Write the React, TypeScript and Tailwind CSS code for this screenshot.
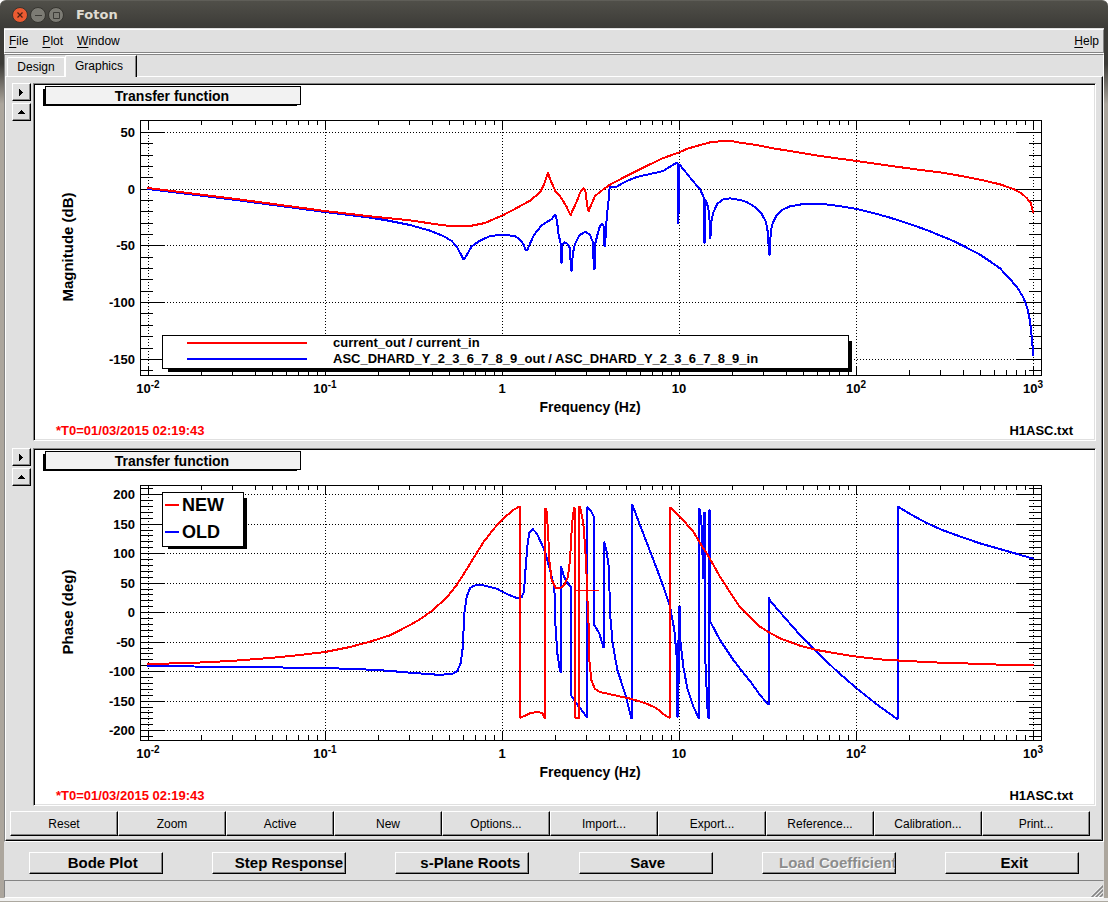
import { ReactNode } from 'react'
import { clsx } from 'clsx'

type Point = [number, number]

interface Trace {
    color: string
    points: Point[]
}

interface PlotProps {
    label: string
    zeroY: number
    perUnit: number
    min: number
    max: number
    majors: number[]
    traces: Trace[]
    children?: ReactNode
}

const RED = '#ff0000'
const BLUE = '#0000ff'

const RAISED = 'border border-t-white border-l-white border-r-black border-b-black bg-[#e0e0e0] shadow-[inset_-1px_-1px_0_#848484]'

// frame of the plot inside the pad
const FRAME = { left: 140, right: 1041, top: 120, bottom: 375 }
const DECADES = [148, 325, 502, 679, 856, 1033]
const DECADE_WIDTH = 177

const tools = ['Reset', 'Zoom', 'Active', 'New', 'Options...', 'Import...', 'Export...', 'Reference...', 'Calibration...', 'Print...']

const actions = [
    { label: 'Bode Plot', className: 'pl-3.5' },
    { label: 'Step Response', className: 'pl-5' },
    { label: 's-Plane Roots', className: 'pl-4' },
    { label: 'Save', className: 'pl-1' },
    { label: 'Load Coefficients', className: 'pl-4', disabled: true },
    { label: 'Exit', className: 'pl-1' },
]

// points are digitised in thirds of a unit, relative to an origin
function third(ox: number, oy: number, flat: number[]): Point[] {
    const out: Point[] = []
    for (let i = 0; i < flat.length; i += 2) {
        out.push([ox + flat[i] / 3, oy + flat[i + 1] / 3])
    }
    return out
}

const magnitudeNew: Point[] = [
    [148, 188], [236, 199], [325, 211],
    ...third(370, 110, [
        0, 319, 60, 325, 120, 331, 200, 343, 240, 348, 300, 348, 345, 339, 400, 315, 440, 294, 480, 272, 510, 247, 520, 228,
        530, 200, 534, 187, 540, 207, 556, 243, 575, 265, 590, 291, 602, 316, 607, 303, 620, 275, 632, 244, 642, 234,
        647, 247, 651, 284, 656, 304, 662, 288, 675, 258, 700, 238, 720, 224, 760, 203, 800, 183, 840, 163, 880, 144,
        928, 127, 950, 117, 980, 108, 1020, 97, 1060, 93, 1085, 93,
    ]),
    ...third(740, 110, [
        0, 98, 50, 105, 100, 115, 180, 128, 240, 138, 350, 153, 440, 166, 520, 177, 600, 187, 670, 199, 730, 211,
        780, 223, 820, 237, 845, 250, 862, 266, 872, 279, 876, 292, 879, 307,
    ]),
]

const magnitudeOld: Point[] = [
    [148, 189], [236, 200], [325, 212],
    ...third(370, 110, [
        0, 323, 50, 331, 120, 345, 180, 362, 220, 378, 245, 393, 260, 410, 272, 432, 281, 449, 292, 432, 305, 409,
        330, 392, 360, 378, 397, 374, 435, 378, 450, 389, 460, 402, 467, 420, 472, 420, 482, 397, 492, 375, 515, 346,
        545, 327, 556, 313, 561, 334, 566, 375, 573, 404, 574, 458, 576, 458, 577, 404, 582, 397, 592, 401, 600, 415,
        603, 482, 606, 482, 608, 432, 615, 403, 628, 376, 646, 365, 660, 375, 668, 395, 672, 478, 674, 478, 676, 400,
        684, 368, 690, 348, 697, 342, 701, 349, 703, 408, 706, 408, 707, 365, 712, 305, 716, 270, 719, 231, 740, 230,
        770, 213, 800, 201, 880, 183, 900, 170, 922, 157, 924, 163, 925, 341, 928, 163, 950, 190, 970, 215, 990, 237,
        1001, 262, 1002, 398, 1005, 398, 1006, 268, 1014, 290, 1018, 318, 1021, 386, 1024, 335, 1030, 307, 1042, 281,
        1060, 268, 1080, 265,
    ]),
    ...third(740, 110, [
        0, 270, 20, 276, 45, 291, 65, 312, 78, 335, 84, 370, 87, 434, 90, 434, 92, 365, 98, 340, 110, 316, 125, 300,
        150, 289, 190, 282, 250, 282, 310, 290, 350, 297, 400, 309, 450, 323, 512, 343, 560, 360, 604, 378, 640, 393,
        680, 413, 720, 434, 750, 454, 780, 475, 805, 502, 830, 530, 850, 562, 862, 595, 870, 632, 874, 668, 877, 700,
        879, 734,
    ]),
]

const phaseNew: Point[] = [
    [148, 299], [190, 298], [230, 296], [270, 293], [300, 290], [325, 287], [350, 282],
    ...third(370, 115, [
        0, 485, 60, 466, 120, 435, 150, 418, 185, 393, 230, 353, 260, 315, 285, 276, 315, 227, 340, 187, 370, 148,
        397, 118, 430, 90, 447, 80, 450, 80, 450, 714, 480, 700, 505, 695, 518, 701, 524, 716, 525, 87, 529, 87,
        534, 150, 538, 240, 545, 300, 557, 324,
    ]),
    ...third(560, 115, [
        0, 325, 13, 315, 24, 290, 30, 240, 35, 150, 39, 105, 43, 82, 45, 90, 45, 714, 57, 714, 58, 78, 62, 90, 70, 130,
        76, 210, 80, 290, 82, 350, 86, 440, 88, 540, 94, 600, 104, 626, 120, 636, 160, 645, 215, 657, 260, 671,
        290, 685, 315, 706, 330, 714, 330, 82, 360, 110, 400, 155, 430, 205, 445, 228, 480, 290, 520, 352,
    ]),
    ...third(740, 115, [
        0, 381, 30, 412, 60, 440, 87, 457, 120, 475, 180, 497, 230, 510, 300, 522, 350, 530, 430, 539, 520, 544,
        600, 548, 700, 551, 780, 554, 880, 555,
    ]),
]

const phaseOld: Point[] = [
    [148, 301], [240, 302], [325, 303],
    ...third(370, 115, [
        0, 569, 50, 572, 120, 578, 200, 584, 245, 583, 262, 573, 272, 550, 278, 505, 283, 400, 290, 350, 300, 325,
        310, 318, 326, 314, 345, 317, 380, 326, 415, 344, 440, 354, 455, 352, 462, 335, 466, 275, 472, 200, 478, 158,
        488, 147, 500, 160, 512, 185, 525, 215, 540, 270, 553, 320, 556, 430, 562, 520, 568, 560, 572, 578, 573, 258,
    ]),
    ...third(560, 115, [
        12, 290, 25, 312, 33, 320, 33, 645, 50, 672, 70, 697, 81, 713, 82, 80, 92, 92, 102, 110, 103, 435, 118, 460,
        131, 505, 132, 185, 140, 215, 147, 265, 150, 400, 158, 490, 172, 570, 195, 640, 215, 718, 216, 72, 240, 135,
        265, 200, 290, 265, 310, 320, 330, 380, 343, 450, 350, 530, 352, 710, 354, 710, 354, 480, 357, 610, 358, 380,
        360, 380, 361, 480, 370, 560, 382, 625, 400, 680, 417, 716, 418, 83, 424, 120, 430, 298, 432, 98, 435, 98,
        436, 540, 442, 680, 445, 714, 447, 714, 447, 90, 449, 90, 451, 425, 480, 480, 520, 540,
    ]),
    ...third(740, 115, [
        0, 566, 30, 603, 60, 645, 86, 675, 87, 352, 90, 362, 130, 408, 180, 465, 240, 525, 290, 573, 350, 625,
        410, 673, 473, 718, 474, 80, 512, 103, 560, 129, 604, 149, 670, 173, 720, 190, 800, 213, 880, 236,
    ]),
]

function Plot({ label, zeroY, perUnit, min, max, majors, traces, children }: PlotProps) {
    const { left, right, top, bottom } = FRAME
    const toY = (v: number) => Math.floor(zeroY - v * perUnit) + 0.5

    const minors: number[] = []
    for (let v = min; v <= max; v += 10) minors.push(v)

    const minorX = DECADES.slice(0, 5).flatMap((x) =>
        [2, 3, 4, 5, 6, 7, 8, 9].map((n) => Math.round(x + DECADE_WIDTH * Math.log10(n)) + 0.5)
    )

    return (
        <svg viewBox="35 85 1059 354" className="block h-auto w-full bg-white font-['Liberation_Sans',sans-serif] font-bold" role="img" aria-label={label}>
            {/* title */}
            <g shapeRendering="crispEdges">
                <rect x="43" y="89" width="254" height="17" />
                <rect x="45.5" y="86.5" width="255" height="18" fill="#f2f2f2" stroke="#000" />
            </g>
            <text x="172" y="101" textAnchor="middle" className="text-[14px]">Transfer function</text>

            {/* grid, frame and ticks */}
            <g shapeRendering="crispEdges" stroke="#000" fill="none">
                {DECADES.map((x) => (
                    <g key={x}>
                        <path d={`M${x + 0.5} ${top}V${bottom}`} strokeDasharray="1 2" />
                        <path d={`M${x + 0.5} ${top}v9M${x + 0.5} ${bottom}v-9`} />
                    </g>
                ))}
                {majors.map((v) => (
                    <g key={v}>
                        <path d={`M${left} ${toY(v)}H${right}`} strokeDasharray="1 2" />
                        <path d={`M${left} ${toY(v)}h24M${right} ${toY(v)}h-24`} />
                    </g>
                ))}
                {minors.map((v) => (
                    <path key={v} d={`M${left} ${toY(v)}h13M${right} ${toY(v)}h-12`} />
                ))}
                {minorX.map((x) => (
                    <path key={x} d={`M${x} ${top}v5M${x} ${bottom}v-5`} />
                ))}
                <rect x={left + 0.5} y={top + 0.5} width={right - left} height={bottom - top} />
            </g>

            {/* traces */}
            <g shapeRendering="crispEdges" fill="none" strokeWidth="2" strokeLinejoin="bevel" strokeLinecap="square">
                {traces.map((t) => (
                    <polyline key={t.color} stroke={t.color} points={t.points.map(([x, y]) => `${x},${y}`).join(' ')} />
                ))}
            </g>

            {/* axis labels */}
            <g className="text-[13px]">
                {majors.map((v) => (
                    <text key={v} x="135" y={Math.floor(toY(v)) + 5} textAnchor="end">{v}</text>
                ))}
                {DECADES.map((x, i) => {
                    const exp = i - 2
                    if (exp === 0 || exp === 1) {
                        return <text key={x} x={x} y="393" textAnchor="middle">{exp ? '10' : '1'}</text>
                    }
                    return (
                        <text key={x} x={x} y="393" textAnchor="middle">
                            10<tspan dy="-5" className="text-[10px]">{exp}</tspan>
                        </text>
                    )
                })}
                <text x="56" y="435" fill={RED}>*T0=01/03/2015 02:19:43</text>
                <text x="1073" y="435" textAnchor="end">H1ASC.txt</text>
            </g>
            <g textAnchor="middle">
                <text x="590" y="412" className="text-[14px]">Frequency (Hz)</text>
                <text transform="translate(73 247) rotate(-90)" className="text-[15px]">{label}</text>
            </g>
            {children}
        </svg>
    )
}

function PlotRow({ children }: { children: ReactNode }) {
    return (
        <div className="flex gap-0.5">
            <div className="flex shrink-0 flex-col gap-0.5">
                <button className={clsx(RAISED, 'flex h-[18px] w-[19px] items-center justify-center')} aria-label="Expand right">
                    <svg width="5" height="7" viewBox="0 0 5 7" shapeRendering="crispEdges"><path d="M0 0h1v1h1v1h1v1h1v1h-1v1h-1v1h-1v1h-1z" /></svg>
                </button>
                <button className={clsx(RAISED, 'flex h-[18px] w-[19px] items-center justify-center')} aria-label="Expand up">
                    <svg width="7" height="4" viewBox="0 0 7 4" shapeRendering="crispEdges"><path d="M3 0h1v1h1v1h1v1h1v1h-7v-1h1v-1h1v-1h1z" /></svg>
                </button>
            </div>
            <div className="min-w-0 flex-1 border border-t-[#848484] border-l-[#848484] border-r-white border-b-white p-px shadow-[inset_1px_1px_0_#000]">
                {children}
            </div>
        </div>
    )
}

function TitleBar() {
    return (
        <header className="flex h-7 items-center rounded-t-md border-t border-[#5f5e58] bg-linear-to-b from-[#504f49] to-[#3c3b37] pl-3">
            <div className="flex gap-0.5">
                <button aria-label="Close">
                    <svg width="16" height="16" viewBox="0 0 16 16">
                        <circle cx="8" cy="8" r="7.5" fill="#ec5b32" stroke="#35342f" />
                        <path d="M5.5 5.5l5 5m0-5l-5 5" stroke="#4a2013" strokeWidth="1.2" />
                    </svg>
                </button>
                <button aria-label="Minimize">
                    <svg width="16" height="16" viewBox="0 0 16 16">
                        <circle cx="8" cy="8" r="7.5" fill="#7c7b74" stroke="#35342f" />
                        <path d="M5 8.5h7" stroke="#3c3b37" />
                    </svg>
                </button>
                <button aria-label="Maximize">
                    <svg width="16" height="16" viewBox="0 0 16 16">
                        <circle cx="8" cy="8" r="7.5" fill="#7c7b74" stroke="#35342f" />
                        <path d="M5.5 5.5h6v6h-6z" fill="none" stroke="#3c3b37" />
                    </svg>
                </button>
            </div>
            <h1 className="pl-3 font-['DejaVu_Sans',sans-serif] text-[13px] font-bold text-[#dfdbd2]">Foton</h1>
        </header>
    )
}

function MenuItem({ hotkey, rest }: { hotkey: string; rest: string }) {
    return (
        <button className="leading-4">
            <span className="underline underline-offset-2">{hotkey}</span>{rest}
        </button>
    )
}

export default function App() {
    return (
        <div className="flex min-h-screen flex-col bg-white font-['Liberation_Sans',sans-serif] text-[12px] text-black">
            <TitleBar />

            <div className="flex-1 bg-[linear-gradient(#3c3b37_36px,#aca69d_76px)] px-1">
                <div className="bg-[#e0e0e0]">
                    <div className="pt-px">
                        <nav className="flex h-6 items-center gap-3.5 border border-t-white border-l-white border-r-[#848484] border-b-[#848484] px-1">
                            <MenuItem hotkey="F" rest="ile" />
                            <MenuItem hotkey="P" rest="lot" />
                            <MenuItem hotkey="W" rest="indow" />
                            <div className="ml-auto">
                                <MenuItem hotkey="H" rest="elp" />
                            </div>
                        </nav>
                        <div className="h-px bg-white" />
                    </div>

                    <div className="border border-t-[#848484] border-l-[#848484] border-r-white border-b-white">
                        <div className="flex h-[21px] items-end pl-0.5" role="tablist">
                            <button role="tab" aria-selected={false} className="h-[19px] w-[58px] rounded-tl-xs border border-b-0 border-white">Design</button>
                            <button role="tab" aria-selected className="relative top-px h-[22px] w-[72px] rounded-tl-xs border-t border-l border-t-white border-l-white border-r border-r-black bg-[#e0e0e0] pr-1 pb-0.5 shadow-[inset_-1px_0_0_#848484]">Graphics</button>
                        </div>

                        <main className="border border-t-white border-l-white border-r-black border-b-black shadow-[inset_-1px_-1px_0_#848484]">
                            <div className="flex flex-col gap-[7px] pt-1.5 pr-1.5 pl-1.5">
                                <PlotRow>
                                    <Plot
                                        label="Magnitude (dB)"
                                        zeroY={189.1}
                                        perUnit={1.135}
                                        min={-160}
                                        max={50}
                                        majors={[50, 0, -50, -100, -150]}
                                        traces={[
                                            { color: BLUE, points: magnitudeOld },
                                            { color: RED, points: magnitudeNew },
                                        ]}
                                    >
                                        <g shapeRendering="crispEdges">
                                            <rect x="168" y="341" width="684" height="31" />
                                            <rect x="162.5" y="335.5" width="686" height="33" fill="#fff" stroke="#000" />
                                            <path d="M187 343h120" stroke={RED} strokeWidth="2" />
                                            <path d="M187 359h120" stroke={BLUE} strokeWidth="2" />
                                        </g>
                                        <g className="text-[13px]">
                                            <text x="333" y="347">current_out / current_in</text>
                                            <text x="333" y="363">ASC_DHARD_Y_2_3_6_7_8_9_out / ASC_DHARD_Y_2_3_6_7_8_9_in</text>
                                        </g>
                                    </Plot>
                                </PlotRow>
                                <PlotRow>
                                    <Plot
                                        label="Phase (deg)"
                                        zeroY={247.6}
                                        perUnit={0.59}
                                        min={-210}
                                        max={210}
                                        majors={[200, 150, 100, 50, 0, -50, -100, -150, -200]}
                                        traces={[
                                            { color: BLUE, points: phaseOld },
                                            { color: RED, points: phaseNew },
                                        ]}
                                    >
                                        <g shapeRendering="crispEdges">
                                            <path d="M575 225.5h24" stroke={RED} />
                                            <rect x="168" y="133" width="79" height="51" />
                                            <rect x="162.5" y="127.5" width="81" height="54" fill="#fff" stroke="#000" />
                                            <path d="M165 140h14" stroke={RED} strokeWidth="2" />
                                            <path d="M165 167h14" stroke={BLUE} strokeWidth="2" />
                                        </g>
                                        <g className="text-[18px]">
                                            <text x="182" y="146">NEW</text>
                                            <text x="182" y="173">OLD</text>
                                        </g>
                                    </Plot>
                                </PlotRow>
                            </div>

                            <div className="grid grid-cols-10 pt-[5px] pr-3 pb-1 pl-1">
                                {tools.map((name) => (
                                    <button key={name} className={clsx(RAISED, 'h-[25px] truncate')}>{name}</button>
                                ))}
                            </div>
                        </main>
                    </div>

                    <div className="grid grid-cols-6 justify-items-center pt-2.5 pb-1.5">
                        {actions.map((a) => (
                            <button
                                key={a.label}
                                disabled={a.disabled}
                                className={clsx(
                                    RAISED,
                                    'h-[22px] w-[134px] overflow-hidden text-center text-[15px] leading-[18px] font-bold whitespace-nowrap',
                                    a.className,
                                    a.disabled && 'text-[#8c8c8c] [text-shadow:1px_1px_0_#fff]'
                                )}
                            >
                                {a.label}
                            </button>
                        ))}
                    </div>

                    <footer className="flex h-[18px] items-end justify-end border border-t-[#848484] border-r-transparent border-b-white border-l-[#848484]">
                        <svg width="12" height="12" viewBox="0 0 12 12">
                            <path d="M-.5 12L12-.5M3.5 12L12 3.5M7.5 12L12 7.5" stroke="#fff" />
                            <path d="M.5 12.5L12.5.5M4.5 12.5L12.5 4.5M8.5 12.5L12.5 8.5" stroke="#848484" strokeWidth="1.6" />
                        </svg>
                    </footer>
                </div>
            </div>
            <div className="h-1 border-b border-[#aca8a0] bg-[#f0f0ef]" />
        </div>
    )
}
